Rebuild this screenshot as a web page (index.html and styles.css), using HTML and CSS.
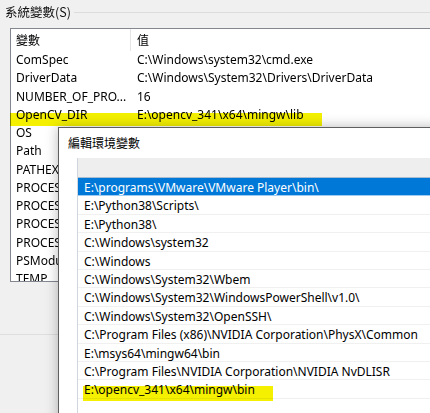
FILE: index.html
```html
<!DOCTYPE html>
<html>
<head>
<meta charset="utf-8">
<link rel="stylesheet" href="styles.css">
</head>
<body>
<div class="page">
  <div class="group-head">
    <span class="group-label">系統變數(S)</span>
    <span class="group-line"></span>
  </div>
  <div class="sys-list">
    <div class="sys-header">
      <div class="col-name">變數</div>
      <div class="col-value">值</div>
    </div>
    <div class="sys-row"><div class="col-name">ComSpec</div><div class="col-value">C:\Windows\system32\cmd.exe</div></div>
    <div class="sys-row"><div class="col-name">DriverData</div><div class="col-value">C:\Windows\System32\Drivers\DriverData</div></div>
    <div class="sys-row"><div class="col-name">NUMBER_OF_PRO...</div><div class="col-value">16</div></div>
    <div class="sys-row"><div class="col-name">OpenCV_DIR</div><div class="col-value">E:\opencv_341\x64\mingw\lib</div></div>
    <div class="sys-row"><div class="col-name">OS</div><div class="col-value">Windows_NT</div></div>
    <div class="sys-row"><div class="col-name">Path</div><div class="col-value">E:\programs\VMware\VMware Player\bin\</div></div>
    <div class="sys-row"><div class="col-name">PATHEXT</div><div class="col-value">.COM;.EXE;.BAT;.CMD</div></div>
    <div class="sys-row"><div class="col-name">PROCESSOR_ARCHITECTURE</div><div class="col-value">AMD64</div></div>
    <div class="sys-row"><div class="col-name">PROCESSOR_IDENTIFIER</div><div class="col-value">Intel64 Family 6</div></div>
    <div class="sys-row"><div class="col-name">PROCESSOR_LEVEL</div><div class="col-value">6</div></div>
    <div class="sys-row"><div class="col-name">PROCESSOR_REVISION</div><div class="col-value">9e0d</div></div>
    <div class="sys-row"><div class="col-name">PSModulePath</div><div class="col-value">%ProgramFiles%\WindowsPowerShell</div></div>
    <div class="sys-row"><div class="col-name">TEMP</div><div class="col-value">C:\Windows\TEMP</div></div>
  </div>
  <div class="left-sep"></div>
  <span class="mark mark-lib"></span>

  <div class="dialog">
    <div class="dialog-title">編輯環境變數</div>
    <div class="dialog-body">
      <div class="path-list">
        <div class="path-head"></div>
        <div class="path-row selected">E:\programs\VMware\VMware Player\bin\</div>
        <div class="path-row">E:\Python38\Scripts\</div>
        <div class="path-row">E:\Python38\</div>
        <div class="path-row">C:\Windows\system32</div>
        <div class="path-row">C:\Windows</div>
        <div class="path-row">C:\Windows\System32\Wbem</div>
        <div class="path-row">C:\Windows\System32\WindowsPowerShell\v1.0\</div>
        <div class="path-row">C:\Windows\System32\OpenSSH\</div>
        <div class="path-row">C:\Program Files (x86)\NVIDIA Corporation\PhysX\Common</div>
        <div class="path-row">E:\msys64\mingw64\bin</div>
        <div class="path-row">C:\Program Files\NVIDIA Corporation\NVIDIA NvDLISR</div>
        <div class="path-row">E:\opencv_341\x64\mingw\bin</div>
        <div class="path-row"></div>
      </div>
    </div>
    <span class="mark mark-bin"></span>
  </div>
</div>
</body>
</html>
```
FILE: styles.css
```css
html, body {
  margin: 0;
  padding: 0;
  background: #f0f0f0;
}

.page {
  position: relative;
  width: 430px;
  height: 413px;
  overflow: hidden;
  background: #f0f0f0;
  font-family: "Noto Sans", "Noto Sans CJK TC", sans-serif;
  font-size: 12px;
  color: #000;
}

.group-head {
  display: flex;
  align-items: center;
  height: 24px;
  padding-left: 5px;
}

.group-label {
  font-family: "Noto Sans CJK TC", sans-serif;
  font-size: 12.5px;
  color: #111;
  line-height: 16px;
  padding-right: 3px;
}

.group-line {
  flex: 1;
  height: 1px;
  background: #dcdcdc;
}

.sys-list {
  margin-top: 4px;
  margin-left: 10px;
  width: 440px;
  height: 254px;
  box-sizing: border-box;
  border: 1px solid #828790;
  background: #fff;
  overflow: hidden;
}

.sys-header {
  display: grid;
  grid-template-columns: 120px 1fr;
  height: 22px;
  line-height: 22px;
  font-family: "Noto Sans CJK TC", sans-serif;
}

.sys-header .col-name {
  border-right: 1px solid #e5e5e5;
}

.sys-row {
  display: grid;
  grid-template-columns: 120px 1fr;
  height: 18.27px;
  line-height: 18px;
}

.col-name {
  padding-left: 5px;
  white-space: nowrap;
  overflow: hidden;
}

.col-value {
  padding-left: 6px;
  white-space: nowrap;
  overflow: hidden;
}

.left-sep {
  margin-top: 52px;
  width: 58px;
  height: 1px;
  background: #dedede;
}

.mark {
  position: absolute;
  background: #f4f000;
  mix-blend-mode: multiply;
}

.mark-lib {
  left: 10px;
  top: 113px;
  width: 312px;
  height: 13px;
}

.dialog {
  position: absolute;
  left: 58px;
  top: 127px;
  width: 420px;
  height: 320px;
  box-sizing: border-box;
  border: 1px solid #5f5f5f;
  background: #fff;
  box-shadow: 0 0 12px rgba(0, 0, 0, 0.28);
}

.dialog-title {
  height: 30px;
  line-height: 30px;
  padding-left: 9px;
  background: #fff;
  font-family: "Noto Sans CJK TC", sans-serif;
  color: #000;
}

.dialog-body {
  padding-left: 18px;
  background: #fff;
}

.path-list {
  box-sizing: border-box;
  border-left: 1px solid #d0d7de;
  background: #fff;
}

.path-head {
  height: 19px;
  background: #eeeeee;
  border-bottom: 1px solid #a9bcd0;
}

.path-row {
  box-sizing: border-box;
  height: 18.4px;
  line-height: 18px;
  padding-top: 1px;
  padding-left: 6px;
  border-bottom: 1px solid #f0f0f0;
  white-space: nowrap;
  overflow: hidden;
}

.path-row.selected {
  background: #0078d7;
  color: #fff;
  border-bottom: 1px solid #9ccaf0;
}

.mark-bin {
  left: 24px;
  top: 258px;
  width: 190px;
  height: 15px;
}
```
